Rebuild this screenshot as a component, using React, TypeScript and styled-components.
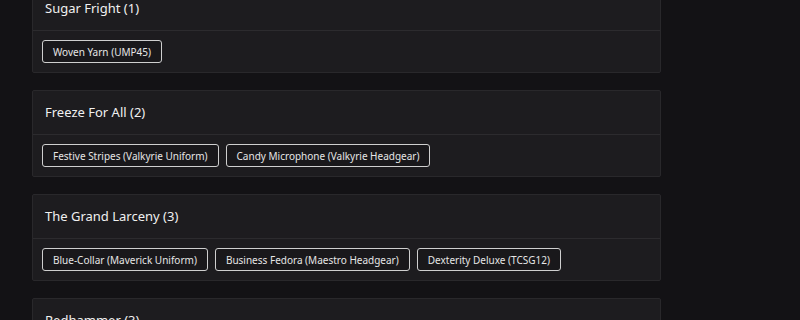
import React from 'react';
import styled, { createGlobalStyle } from 'styled-components';

const GlobalStyle = createGlobalStyle`
  html, body {
    margin: 0;
    padding: 0;
    background: #131215;
    overflow: hidden;
  }
`;

interface Group {
  readonly name: string;
  readonly items: string[];
};

const groups: Group[] = [
  { name: 'Sugar Fright', items: ['Woven Yarn (UMP45)'] },
  { name: 'Freeze For All', items: ['Festive Stripes (Valkyrie Uniform)', 'Candy Microphone (Valkyrie Headgear)'] },
  {
    name: 'The Grand Larceny',
    items: ['Blue-Collar (Maverick Uniform)', 'Business Fedora (Maestro Headgear)', 'Dexterity Deluxe (TCSG12)'],
  },
  { name: 'Redhammer', items: ['Hammer Time (Sledge Uniform)', 'Red Alert (Sledge Headgear)', 'Crimson Tide (L85A2)'] },
];

const Page = styled.div`
  display: flex;
  flex-direction: column;
  gap: 17px;
  padding: 0 32px;
  margin-top: -14px;
  width: 629px;
  font-family: 'Noto Sans', 'Open Sans', sans-serif;
`;

const Card = styled.section`
  background: #1d1c1f;
  border: 1px solid #29282b;
  border-radius: 2px;
`;

const Header = styled.div`
  height: 43px;
  display: flex;
  align-items: center;
  padding: 0 12px;
  border-bottom: 1px solid #2c2b2e;
`;

const Title = styled.h3`
  margin: 0 0 2px;
  font-size: 13px;
  font-weight: 400;
  color: #f0f0f0;
`;

const Body = styled.div`
  display: flex;
  flex-wrap: wrap;
  gap: 7px;
  padding: 9px;
`;

const Chip = styled.span`
  display: inline-flex;
  align-items: center;
  height: 21px;
  padding: 0 10px;
  border: 1px solid #cfcfcf;
  border-radius: 3px;
  background: #19181b;
  color: #e6e6e6;
  font-size: 10px;
  white-space: nowrap;
`;

const App = () => {
  return (
    <>
      <GlobalStyle />
      <Page>
        {groups.map((group) => (
          <Card key={group.name}>
            <Header>
              <Title>{group.name} ({group.items.length})</Title>
            </Header>
            <Body>
              {group.items.map((item) => (
                <Chip key={item}>{item}</Chip>
              ))}
            </Body>
          </Card>
        ))}
      </Page>
    </>
  );
};

export default App;
